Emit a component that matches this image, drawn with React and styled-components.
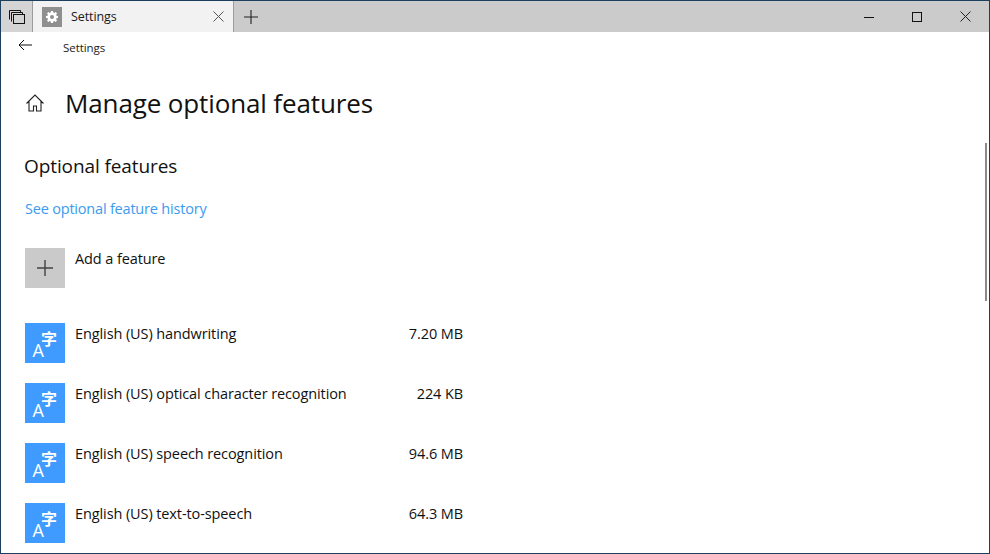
import React from 'react';
import styled, { createGlobalStyle } from 'styled-components';

const Global = createGlobalStyle`
  html, body { margin: 0; padding: 0; background: #fff; }
  #root { width: 990px; height: 554px; }
  * { box-sizing: border-box; }
`;
const FONT = `"Open Sans", "Noto Sans", "Liberation Sans", sans-serif`;

const Frame = styled.div`
  position: relative; width: 990px; height: 554px; overflow: hidden;
  border: 1px solid #1c3f5e; background: #fff; display: flex; flex-direction: column;
  font-family: ${FONT}; color: #111;
`;
const TitleBar = styled.div`
  height: 31px; flex: none; display: flex; align-items: stretch; background: #cbcbcb;
`;
const TabSlot = styled.div`
  width: 32px; flex: none; display: flex; align-items: center; justify-content: center;
  border-right: 1px solid #9c9c9c; background: ${p => p.$tint || 'transparent'};
`;
const Tab = styled.div`
  width: 201px; flex: none; display: flex; align-items: center; background: #f2f2f2;
  border-right: 1px solid #9c9c9c; padding: 0 9px 0 9px;
`;
const GearBox = styled.div`
  width: 20px; height: 20px; background: #8f8f8f; display: flex; align-items: center; justify-content: center;
`;
const TabTitle = styled.span`
  font-size: 12.5px; margin-left: 9px; flex: 1; letter-spacing: -0.1px; color: #1a1a1a;
`;
const NewTab = styled.div`
  width: 33px; flex: none; display: flex; align-items: center; justify-content: center;
`;
const Spacer = styled.div` flex: 1; `;
const WinButton = styled.div`
  width: 48px; flex: none; display: flex; align-items: center; justify-content: center;
`;
const NavBar = styled.div`
  height: 30px; flex: none; display: flex; align-items: center; padding-left: 17px;
`;
const BackArrow = styled.svg`
  margin-top: -5px; flex: none;
`;
const NavTitle = styled.span`
  font-size: 11.5px; margin-left: 31px; margin-top: 1px; letter-spacing: -0.05px; color: #1a1a1a;
`;
const Content = styled.div`
  flex: 1; padding: 0 0 0 24px; display: flex; flex-direction: column;
`;
const Header = styled.div`
  display: flex; align-items: center; height: 44px; margin-top: 19px;
`;
const PageTitle = styled.h1`
  margin: 0 0 0 20px; font-size: 26px; font-weight: 400; letter-spacing: -0.13px; color: #111; line-height: 36px;
`;
const Section = styled.h2`
  margin: 28px 0 0 -1px; font-size: 19px; font-weight: 400; line-height: 26px; letter-spacing: -0.1px; color: #111;
`;
const HistoryLink = styled.a`
  margin: 20px 0 0 0; font-size: 14.5px; line-height: 20px; color: #3a9bf0; letter-spacing: -0.2px;
`;
const Row = styled.div`
  display: flex; width: 438px; height: 40px; margin-top: ${p => p.$gap}px;
`;
const Tile = styled.div`
  width: 40px; height: 40px; flex: none; display: flex; align-items: center; justify-content: center;
  background: ${p => p.$bg};
`;
const Name = styled.span`
  margin-left: 10px; flex: 1; font-size: 14.5px; line-height: 20px; margin-top: 1px; color: #111; letter-spacing: -0.1px;
  white-space: nowrap;
`;
const Size = styled.span`
  font-size: 14.5px; line-height: 20px; margin-top: 1px; color: #111; letter-spacing: -0.1px; text-align: right;
`;
const ScrollThumb = styled.div`
  position: absolute; left: 984px; top: 142px; width: 2px; height: 158px; background: #8a8a8a;
`;

const LangIcon = () => (
  <svg width="40" height="40" viewBox="0 0 40 40">
    <text x="7.500" y="33.500" fontFamily='"Open Sans", sans-serif' fontSize="18" fontWeight="500" fill="#fff">A</text>
    <text x="16" y="22" fontFamily='"Noto Sans CJK SC", sans-serif' fontSize="16" fontWeight="700" fill="#fff">字</text>
  </svg>
);

const features = [
  ['English (US) handwriting', '7.20 MB'],
  ['English (US) optical character recognition', '224 KB'],
  ['English (US) speech recognition', '94.6 MB'],
  ['English (US) text-to-speech', '64.3 MB'],
];

export default function App() {
  return (
    <>
      <Global />
      <Frame>
        <TitleBar>
          <TabSlot $tint="#d4d4d4">
            <svg width="16" height="14" viewBox="0 0 16 14" fill="none" stroke="#111" strokeWidth="1">
              <path d="M.5 9.500V.5h11v2M2.500 11.500v-9h11v2" />
              <rect x="4.500" y="4.500" width="11" height="9" fill="#d4d4d4" />
            </svg>
          </TabSlot>
          <Tab>
            <GearBox>
              <svg width="12" height="12" viewBox="0 0 12 12">
                <path fill="#fff" fillRule="evenodd" d="M5 0h2l.3 1.6 1 .4L9.700 1l1.400 1.400-1 1.400.4 1L12 5v2l-1.500.3-.4 1 1 1.300-1.400 1.500-1.400-1-1 .4L7 12H5l-.3-1.500-1-.4-1.300 1L1 9.700l1-1.400-.4-1L0 7V5l1.600-.3.4-1-1-1.300L2.400 1l1.300 1 1-.4zM6 4a2 2 0 100 4 2 2 0 000-4z" />
              </svg>
            </GearBox>
            <TabTitle>Settings</TabTitle>
            <svg width="11" height="11" viewBox="0 0 11 11" stroke="#555" strokeWidth="1"><path d="M.5.500l10 10M10.500.500l-10 10" /></svg>
          </Tab>
          <NewTab>
            <svg width="14" height="14" viewBox="0 0 14 14" stroke="#222" strokeWidth="1.100"><path d="M7 0v14M0 7h14" /></svg>
          </NewTab>
          <Spacer />
          <WinButton>
            <svg width="10" height="10" viewBox="0 0 10 10" stroke="#111" strokeWidth="1"><path d="M0 5.500h10" /></svg>
          </WinButton>
          <WinButton>
            <svg width="10" height="10" viewBox="0 0 10 10" fill="none" stroke="#111" strokeWidth="1"><rect x=".5" y=".5" width="9" height="9" /></svg>
          </WinButton>
          <WinButton>
            <svg width="11" height="11" viewBox="0 0 11 11" stroke="#222" strokeWidth="1"><path d="M.5.500l10 10M10.500.500l-10 10" /></svg>
          </WinButton>
        </TitleBar>
        <NavBar>
          <BackArrow width="14" height="12" viewBox="0 0 14 12" fill="none" stroke="#111" strokeWidth="1"><path d="M14 6H1M6 1 1 6l5 5" /></BackArrow>
          <NavTitle>Settings</NavTitle>
        </NavBar>
        <Content>
          <Header>
            <svg width="20" height="20" viewBox="0 0 20 20" fill="none" stroke="#222" strokeWidth="1.100">
              <path d="M1.500 10.500 10 2l8.500 8.500M4 8.500V18h4.500v-5h3v5H16V8.500" />
            </svg>
            <PageTitle>Manage optional features</PageTitle>
          </Header>
          <Section>Optional features</Section>
          <HistoryLink>See optional feature history</HistoryLink>
          <Row $gap={29}>
            <Tile $bg="#cacaca">
              <svg width="18" height="18" viewBox="0 0 18 18" stroke="#444" strokeWidth="1.400"><path d="M9 1v16M1 9h16" /></svg>
            </Tile>
            <Name>Add a feature</Name>
          </Row>
          {features.map(([name, size], i) => (
            <Row key={name} $gap={i === 0 ? 35 : 20}>
              <Tile $bg="#3f9bff"><LangIcon /></Tile>
              <Name>{name}</Name>
              <Size>{size}</Size>
            </Row>
          ))}
        </Content>
        <ScrollThumb />
      </Frame>
    </>
  );
}
